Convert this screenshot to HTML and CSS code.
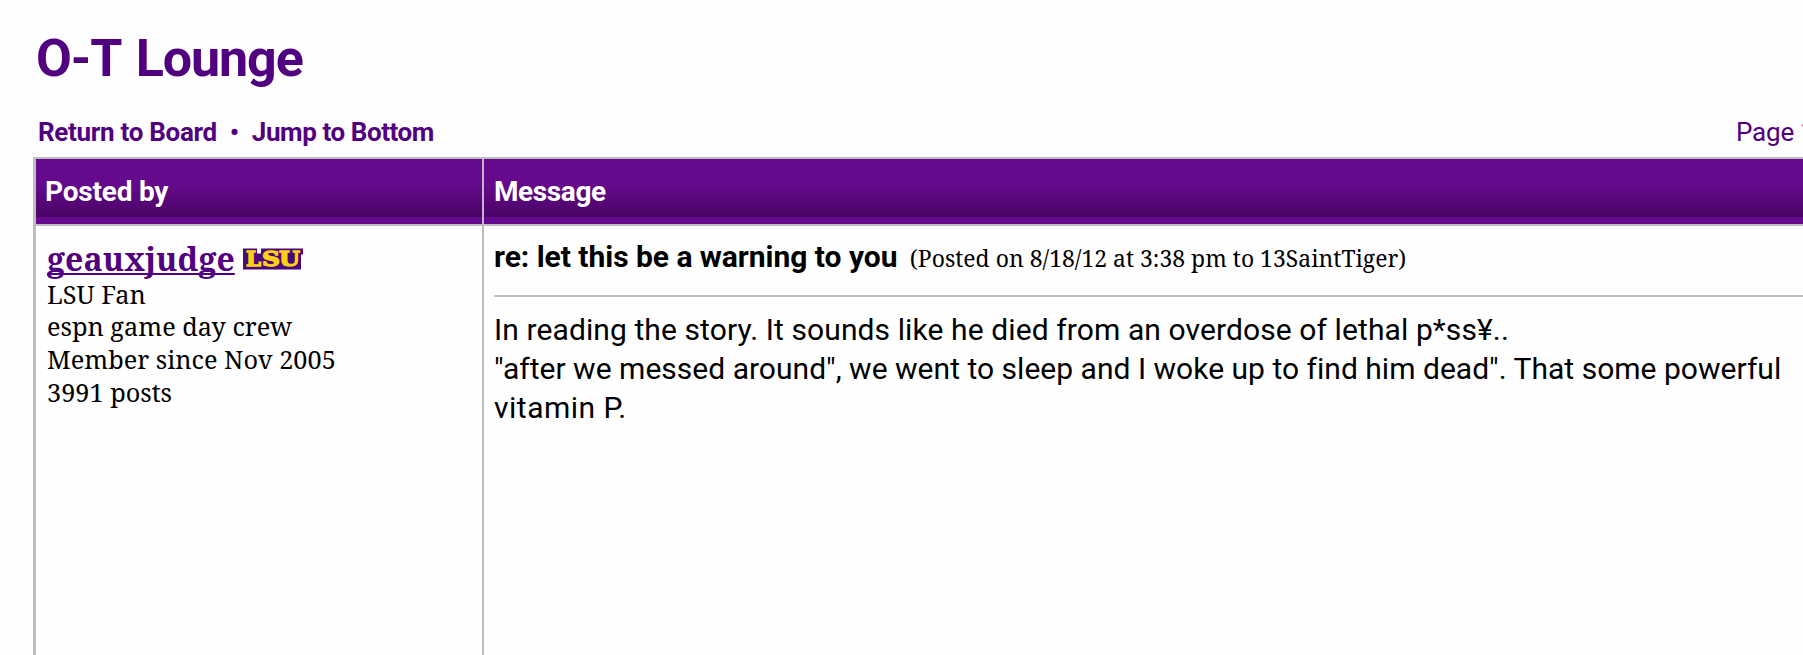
FILE: index.html
```html
<!DOCTYPE html>
<html lang="en">
<head>
    <meta charset="UTF-8">
    <meta name="viewport" content="width=device-width, initial-scale=1.0">
    <title>O-T Lounge</title>
    <link rel="stylesheet" href="styles.css">
</head>
<body>
    <h1 class="title">O-T Lounge</h1>

    <div class="nav">
        <div class="nav-links">
            <a href="#">Return to Board</a>
            <span class="dot">•</span>
            <a href="#" class="jump">Jump to Bottom</a>
        </div>
        <div class="page">Page 1</div>
    </div>

    <div class="thread">
        <div class="head">Posted by</div>
        <div class="head head-message">Message</div>

        <div class="author">
            <div class="user">
                <a href="#">geauxjudge</a>
                <svg class="logo" width="62" height="24" viewBox="0 0 62 24">
                    <path class="logo-back" d="M1 1.5h14v5h4v-5h42v6h-2v15H1z"/>
                    <g class="logo-fill">
                        <text x="4" y="19" textLength="15" lengthAdjust="spacingAndGlyphs">L</text>
                        <text x="20" y="19" textLength="18" lengthAdjust="spacingAndGlyphs">S</text>
                        <text x="37" y="19" textLength="21" lengthAdjust="spacingAndGlyphs">U</text>
                    </g>
                </svg>
            </div>
            <div class="info">LSU Fan</div>
            <div class="info">espn game day crew</div>
            <div class="info">Member since Nov 2005</div>
            <div class="info">3991 posts</div>
        </div>

        <div class="message">
            <div class="subject">
                <b>re: let this be a warning to you</b>
                <span class="posted">(Posted on 8/18/12 at 3:38 pm to 13SaintTiger)</span>
            </div>
            <div class="text">
                <span class="wide">In reading the story. It sounds like he died from an overdose of lethal p*ss¥..</span><br>
                "after we messed around", we went to sleep and I woke up to find him dead". That some powerful<br>
                <span class="wider">vitamin P.</span>
            </div>
        </div>
    </div>
</body>
</html>
```
FILE: styles.css
```css
* {
    box-sizing: border-box;
}

body {
    margin: 0;
    height: 655px;
    overflow: hidden;
    display: flex;
    flex-direction: column;
    background-color: #fefefe;
    color: #000;
    font-family: Roboto, sans-serif;
}

a {
    color: #510080;
    text-decoration: none;
}

.title {
    margin: 28px 0 0 36px;
    height: 74px;
    color: #510080;
    font-size: 52px;
    font-weight: bold;
    line-height: 61px;
    letter-spacing: -1.1px;
    word-spacing: 4px;
}

.nav {
    display: flex;
    justify-content: space-between;
    height: 55px;
    padding: 13px 0 0 38px;
    color: #510080;
    font-size: 26px;
    line-height: 34px;
    white-space: nowrap;
}

.nav-links {
    display: flex;
    font-weight: bold;
    letter-spacing: -0.3px;
}

.dot {
    width: 35px;
    text-align: center;
}

.jump {
    letter-spacing: -0.42px;
}

.page {
    width: 67px;
    letter-spacing: -0.2px;
}

.thread {
    flex: 1;
    display: grid;
    grid-template-columns: 448px 1fr;
    grid-template-rows: 67px 1fr;
    margin-left: 33px;
    border-top: 2px solid #bebebe;
    border-left: 3px solid #bebebe;
}

.head {
    padding: 16px 0 0 9px;
    border-right: 2px solid #c5b3cd;
    border-bottom: 2px solid #bebebe;
    background: linear-gradient(#650a8c 0, #650a8c 25px, #4a0365 58px, #650a8c 58px);
    color: #fff;
    font-size: 28px;
    font-weight: bold;
    line-height: 34px;
    letter-spacing: -0.2px;
}

.head-message {
    padding-left: 10px;
    border-right: none;
    letter-spacing: -0.4px;
}

.author {
    padding: 14px 0 0 11px;
    border-right: 2px solid #bebebe;
    font-family: "Noto Serif", serif;
}

.user {
    display: flex;
    height: 38px;
    font-size: 32px;
    font-weight: bold;
    line-height: 38px;
    letter-spacing: 0.1px;
}

.user a {
    text-decoration: underline;
    text-decoration-thickness: 2px;
    text-decoration-skip-ink: none;
    text-underline-offset: 2px;
}

.logo {
    margin: 7px 0 0 7px;
}

.logo text {
    font: bold 20px "DejaVu Serif", serif;
    letter-spacing: 0;
}

.logo-back {
    fill: #4b0878;
}

.logo-fill {
    fill: #fdd017;
    stroke: #fdd017;
    stroke-width: 1.3px;
}

.info {
    font-size: 25.3px;
    line-height: 32.4px;
}

.info:last-child {
    padding-top: 1px;
}

.message {
    padding: 12px 0 0 10px;
}

.subject {
    height: 59px;
    border-bottom: 2px solid #bebebe;
    font-size: 30px;
    line-height: 38px;
    white-space: nowrap;
    letter-spacing: -0.03px;
}

.posted {
    margin-left: 5px;
    font-family: "Noto Serif", serif;
    font-size: 22.9px;
    letter-spacing: 0.03px;
}

.text {
    padding-top: 13px;
    font-size: 30px;
    line-height: 39px;
    white-space: nowrap;
    letter-spacing: 0.02px;
}

.wide {
    letter-spacing: 0.1px;
}

.wider {
    letter-spacing: 0.5px;
}
```
